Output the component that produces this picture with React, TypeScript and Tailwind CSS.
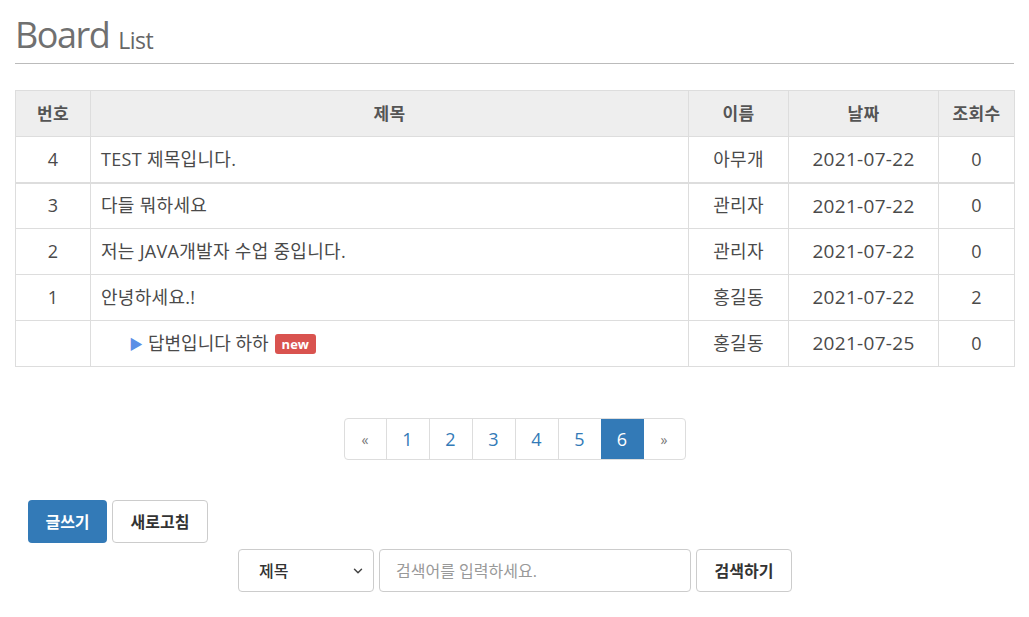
import { ChevronDown } from 'lucide-react'

const rows = [
  { no: '4', title: 'TEST 제목입니다.', name: '아무개', date: '2021-07-22', hit: '0' },
  { no: '3', title: '다들 뭐하세요', name: '관리자', date: '2021-07-22', hit: '0' },
  { no: '2', title: '저는 JAVA개발자 수업 중입니다.', name: '관리자', date: '2021-07-22', hit: '0' },
  { no: '1', title: '안녕하세요.!', name: '홍길동', date: '2021-07-22', hit: '2' },
  { no: '', title: '답변입니다 하하', name: '홍길동', date: '2021-07-25', hit: '0', reply: true },
]

const pages = ['1', '2', '3', '4', '5', '6']

export default function App() {
  return (
    <div
      className="min-h-[617px] bg-white px-[15px] text-[#4a4a4a]"
      style={{ fontFamily: '"Open Sans", "Noto Sans CJK KR", sans-serif' }}
    >
      <div className="flex items-end gap-[9px] pt-[13px] pb-[6px] border-b border-[#bbb]">
        <h1 className="text-[36px] leading-[44px] tracking-[-1.5px] text-[#707070]">Board</h1>
        <span className="text-[23px] leading-[34px] font-medium tracking-[-0.5px] text-[#666]">List</span>
      </div>

      <table className="mt-[26px] w-[1000px] border-collapse text-[18px] tracking-[0.3px]">
        <thead>
          <tr className="h-[46px] bg-[#eee] text-[17px] text-[#555]">
            <th className="w-[75px] border border-[#ddd] font-bold">번호</th>
            <th className="border border-[#ddd] font-bold">제목</th>
            <th className="w-[100px] border border-[#ddd] font-bold">이름</th>
            <th className="w-[150px] border border-[#ddd] font-bold">날짜</th>
            <th className="w-[76px] border border-[#ddd] font-bold">조회수</th>
          </tr>
        </thead>
        <tbody>
          {rows.map((r, i) => (
            <tr key={i} className={i === 0 ? 'h-[46px] border-b-2 border-[#ddd]' : 'h-[46px]'}>
              <td className="border border-[#ddd] text-center">{r.no}</td>
              <td className="border border-[#ddd] px-[10px]">
                {r.reply ? (
                  <span className="flex items-center pl-[28px] tracking-normal">
                    <span className="mr-[5px] text-[14px] text-[#5b8fe6]">▶</span>
                    답변입니다 하하
                    <span className="ml-[6px] rounded-[3px] bg-[#d9534f] px-[7px] text-[13px] font-bold leading-[20px] text-white">
                      new
                    </span>
                  </span>
                ) : (
                  r.title
                )}
              </td>
              <td className={`border border-[#ddd] text-center ${i === 0 ? 'border-b-2' : ''}`}>{r.name}</td>
              <td className={`border border-[#ddd] text-center text-[19px] ${i === 0 ? 'border-b-2' : ''}`}>{r.date}</td>
              <td className={`border border-[#ddd] text-center ${i === 0 ? 'border-b-2' : ''}`}>{r.hit}</td>
            </tr>
          ))}
        </tbody>
      </table>

      <div className="mt-[51px] flex justify-center">
        <ul className="flex h-[42px] overflow-hidden rounded-[4px] border border-[#ddd] text-[18px]">
          <li className="flex w-[41px] items-center justify-center text-[14px] text-[#777]">«</li>
          {pages.map((p) => (
            <li
              key={p}
              className={
                p === '6'
                  ? 'flex w-[43px] items-center justify-center bg-[#337ab7] text-white'
                  : 'flex w-[43px] items-center justify-center border-l border-[#ddd] text-[#337ab7]'
              }
            >
              {p}
            </li>
          ))}
          <li className="flex w-[41px] items-center justify-center text-[14px] text-[#777]">»</li>
        </ul>
      </div>

      <div className="mt-[40px] flex gap-[5px] pl-[13px]">
        <button className="h-[43px] w-[79px] rounded-[4px] bg-[#337ab7] text-[16px] font-bold text-white">
          글쓰기
        </button>
        <button className="h-[43px] w-[96px] rounded-[4px] border border-[#ccc] bg-white text-[16px] font-bold text-[#333]">
          새로고침
        </button>
      </div>

      <div className="mt-[6px] flex gap-[5px] pl-[223px]">
        <div className="flex h-[43px] w-[136px] items-center justify-between rounded-[4px] border border-[#ccc] px-[20px] pr-[8px] text-[16px] font-medium text-[#333]">
          <span>제목</span>
          <ChevronDown size={14} strokeWidth={2.5} className="text-[#444]" />
        </div>
        <input
          className="h-[43px] w-[312px] rounded-[4px] border border-[#ccc] px-[16px] text-[16px] text-[#333] placeholder:text-[#999]"
          placeholder="검색어를 입력하세요."
        />
        <button className="h-[43px] w-[96px] rounded-[4px] border border-[#ccc] bg-white text-[16px] font-bold text-[#333]">
          검색하기
        </button>
      </div>
    </div>
  )
}
